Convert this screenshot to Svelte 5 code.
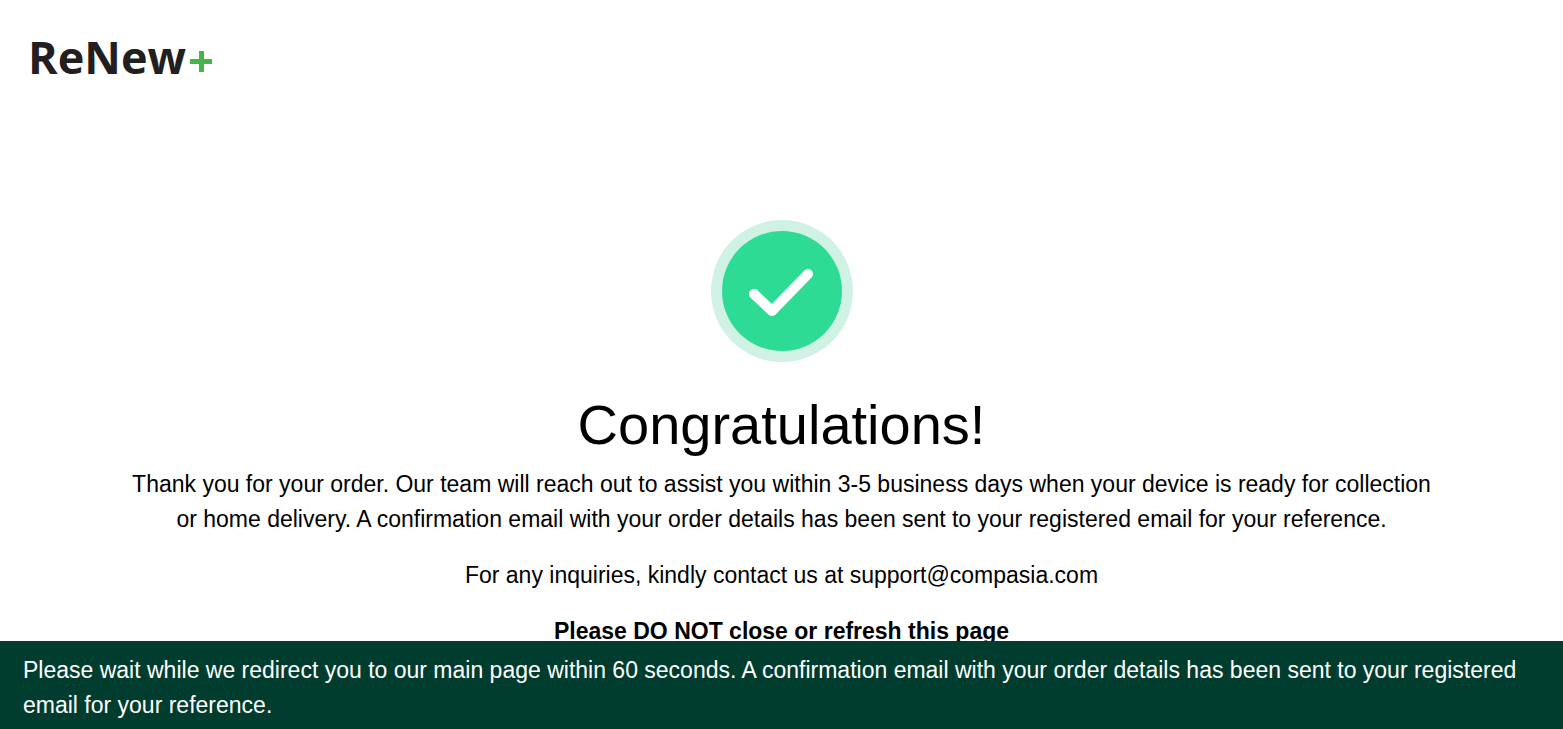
<script lang="ts">
  const supportEmail = "support@compasia.com";
  const redirectSeconds = 60;
</script>

<div class="page">
  <header>
    <span class="logo">ReNew<svg class="plus" viewBox="0 0 24 24" aria-hidden="true"><path d="M10 2h5v8h8v5h-8v8h-5v-8H1v-5h9z" /></svg></span>
  </header>

  <main>
    <svg class="success" viewBox="0 0 142 142" role="img" aria-label="Success">
      <circle cx="71" cy="71" r="71" fill="#d0f2e4" />
      <circle cx="71" cy="71" r="60" fill="#2ddb95" />
      <path d="M43 74l18 17 36-37" fill="none" stroke="#fff" stroke-width="10" stroke-linecap="round" stroke-linejoin="round" />
    </svg>

    <h1>Congratulations!</h1>
    <p>
      Thank you for your order. Our team will reach out to assist you within 3-5 business days when
      your device is ready for collection or home delivery. A confirmation email with your order
      details has been sent to your registered email for your reference.
    </p>
    <p>For any inquiries, kindly contact us at {supportEmail}</p>
    <p><strong>Please DO NOT close or refresh this page</strong></p>
  </main>

  <footer>
    Please wait while we redirect you to our main page within {redirectSeconds} seconds. A confirmation
    email with your order details has been sent to your registered email for your reference.
  </footer>
</div>

<style>
  :global(body) {
    margin: 0;
    background: #fff;
  }

  .page {
    font-family: "Liberation Sans", Arial, sans-serif;
    font-size: 23px;
    line-height: 35px;
    color: #000;
  }

  header {
    padding: 24px 28px;
  }

  .logo {
    display: flex;
    align-items: center;
    font-family: "Open Sans", "Noto Sans", sans-serif;
    font-size: 45px;
    font-weight: 700;
    line-height: 66px;
    color: #231f20;
  }

  .plus {
    width: 24px;
    height: 24px;
    margin-top: 8px;
    margin-left: 3px;
    fill: #43b649;
  }

  main {
    padding: 106px 120px 80px;
    text-align: center;
  }

  .success {
    display: block;
    width: 142px;
    height: 142px;
    margin: 0 auto 28px;
  }

  h1 {
    margin: 0 0 8px;
    font-size: 56px;
    font-weight: 400;
    line-height: 69px;
  }

  p {
    margin: 0 0 21px;
  }

  /* Redirect notice stays pinned over the bottom of the page */
  footer {
    position: fixed;
    right: 0;
    bottom: 0;
    left: 0;
    padding: 12px 23px 6px;
    background: #003d2e;
    color: #fff;
  }
</style>
